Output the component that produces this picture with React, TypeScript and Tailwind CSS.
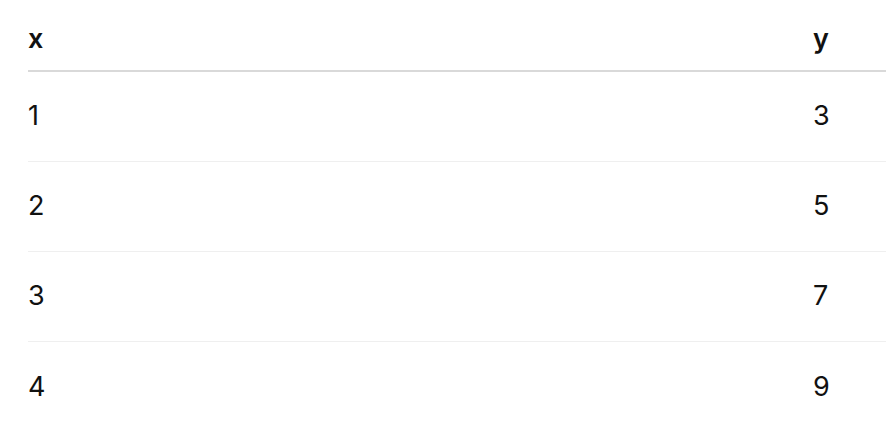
import React from 'react';

const rows = [
  { x: 1, y: 3 },
  { x: 2, y: 5 },
  { x: 3, y: 7 },
  { x: 4, y: 9 },
];

const App = () => {
  return (
    <div className="w-[886px] h-[434px] bg-white pl-[28px] overflow-hidden text-[#111111]" style={{ fontFamily: 'Inter, "Liberation Sans", sans-serif' }}>
      <div className="w-[900px]">
        <div className="grid grid-cols-[785px_1fr] h-[72px] items-center border-b-2 border-[#d9d9d9] text-[27px] font-semibold pt-[8px]">
          <div>x</div>
          <div>y</div>
        </div>
        {rows.map((r, i) => (
          <div
            key={r.x}
            className={`grid grid-cols-[785px_1fr] h-[90px] items-center text-[27px] ${i < rows.length - 1 ? 'border-b border-[#efefef]' : ''}`}
          >
            <div>{r.x}</div>
            <div>{r.y}</div>
          </div>
        ))}
      </div>
    </div>
  );
};

export default App;
